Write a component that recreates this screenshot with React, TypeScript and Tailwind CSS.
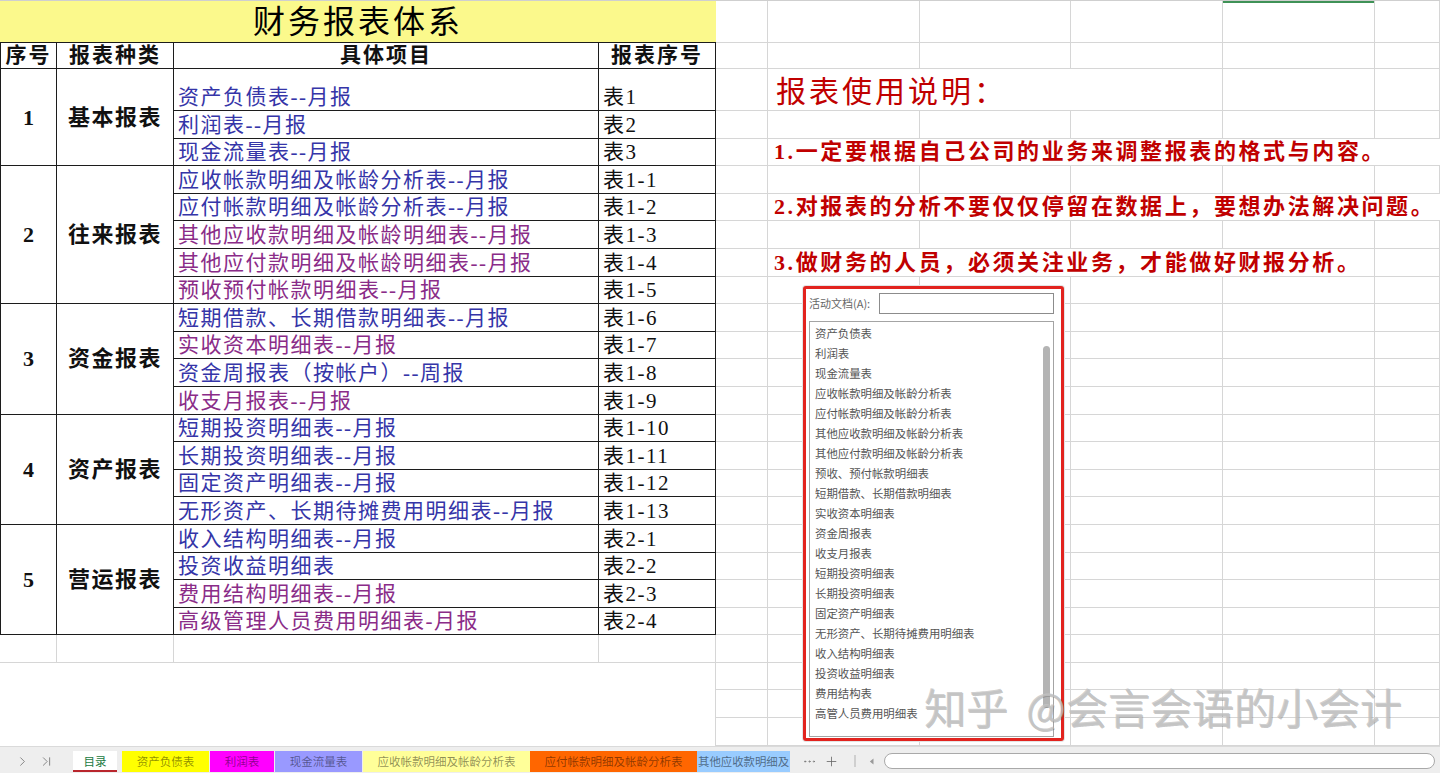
import React from "react";
import { ChevronRight, ChevronLast, Plus, MoreHorizontal } from "lucide-react";

type Item = { t: string; c: string; p?: boolean };
type Group = { n: string; name: string; span: string; items: Item[] };

const groups: Group[] = [
  {
    n: "1",
    name: "基本报表",
    span: "row-span-3",
    items: [
      { t: "资产负债表--月报", c: "表1" },
      { t: "利润表--月报", c: "表2" },
      { t: "现金流量表--月报", c: "表3" },
    ],
  },
  {
    n: "2",
    name: "往来报表",
    span: "row-span-5",
    items: [
      { t: "应收帐款明细及帐龄分析表--月报", c: "表1-1" },
      { t: "应付帐款明细及帐龄分析表--月报", c: "表1-2" },
      { t: "其他应收款明细及帐龄明细表--月报", c: "表1-3", p: true },
      { t: "其他应付款明细及帐龄明细表--月报", c: "表1-4", p: true },
      { t: "预收预付帐款明细表--月报", c: "表1-5", p: true },
    ],
  },
  {
    n: "3",
    name: "资金报表",
    span: "row-span-4",
    items: [
      { t: "短期借款、长期借款明细表--月报", c: "表1-6" },
      { t: "实收资本明细表--月报", c: "表1-7", p: true },
      { t: "资金周报表（按帐户）--周报", c: "表1-8" },
      { t: "收支月报表--月报", c: "表1-9", p: true },
    ],
  },
  {
    n: "4",
    name: "资产报表",
    span: "row-span-4",
    items: [
      { t: "短期投资明细表--月报", c: "表1-10" },
      { t: "长期投资明细表--月报", c: "表1-11" },
      { t: "固定资产明细表--月报", c: "表1-12" },
      { t: "无形资产、长期待摊费用明细表--月报", c: "表1-13" },
    ],
  },
  {
    n: "5",
    name: "营运报表",
    span: "row-span-4",
    items: [
      { t: "收入结构明细表--月报", c: "表2-1" },
      { t: "投资收益明细表", c: "表2-2" },
      { t: "费用结构明细表--月报", c: "表2-3", p: true },
      { t: "高级管理人员费用明细表-月报", c: "表2-4", p: true },
    ],
  },
];

const listItems = [
  "资产负债表",
  "利润表",
  "现金流量表",
  "应收帐款明细及帐龄分析表",
  "应付帐款明细及帐龄分析表",
  "其他应收款明细及帐龄分析表",
  "其他应付款明细及帐龄分析表",
  "预收、预付帐款明细表",
  "短期借款、长期借款明细表",
  "实收资本明细表",
  "资金周报表",
  "收支月报表",
  "短期投资明细表",
  "长期投资明细表",
  "固定资产明细表",
  "无形资产、长期待摊费用明细表",
  "收入结构明细表",
  "投资收益明细表",
  "费用结构表",
  "高管人员费用明细表",
];

const G = "border-r border-b border-[#d6d6d6]";
const B = "border-r border-b border-[#1c1c1c]";
const SERIF = "[font-family:'Liberation_Serif','Noto_Sans_CJK_SC',serif]";
const SANS = "[font-family:'Noto_Sans_CJK_SC','Liberation_Sans',sans-serif]";
const RED_LINE =
  "col-span-5 border-b border-[#d6d6d6] flex items-end pl-[6px] whitespace-nowrap text-[22px] leading-[26px] tracking-[2.6px] font-bold text-[#c00000]";

function rightCells(r: number): React.ReactNode[] {
  const out: React.ReactNode[] = [<div key={`r${r}c4`} className={G} />];
  if (r === 0) {
    for (let c = 5; c < 10; c++)
      out.push(
        <div key={`r0c${c}`} className={`${G} relative`}>
          {c === 8 && <div className="absolute left-0 right-0 top-0 h-[2px] bg-[#3f9257]" />}
        </div>
      );
    return out;
  }
  if (r === 2) {
    out.push(
      <div
        key="r2t"
        className={`col-span-2 border-b border-[#d6d6d6] flex items-end pl-[8px] whitespace-nowrap text-[30px] leading-[36px] tracking-[3px] text-[#c00000] ${SERIF}`}
      >
        报表使用说明：
      </div>
    );
    for (let c = 7; c < 10; c++) out.push(<div key={`r2c${c}`} className={G} />);
    return out;
  }
  if (r === 4) {
    out.push(
      <div key="r4t" className={`${RED_LINE} ${SERIF}`}>
        1.一定要根据自己公司的业务来调整报表的格式与内容。
      </div>
    );
    return out;
  }
  if (r === 6) {
    out.push(
      <div key="r6t" className={`${RED_LINE} ${SERIF}`}>
        2.对报表的分析不要仅仅停留在数据上，要想办法解决问题。
      </div>
    );
    return out;
  }
  if (r === 8) {
    out.push(
      <div
        key="r8t"
        className={`col-span-4 border-r border-b border-[#d6d6d6] flex items-end pl-[6px] whitespace-nowrap text-[22px] leading-[26px] tracking-[2.6px] font-bold text-[#c00000] ${SERIF}`}
      >
        3.做财务的人员，必须关注业务，才能做好财报分析。
      </div>
    );
    out.push(<div key="r8c9" className={G} />);
    return out;
  }
  for (let c = 5; c < 10; c++) out.push(<div key={`r${r}c${c}`} className={G} />);
  return out;
}

function buildCells(): React.ReactNode[] {
  const cells: React.ReactNode[] = [];
  cells.push(
    <div
      key="title"
      className={`col-span-4 bg-[#fbf98c] border-b border-[#1c1c1c] flex items-center justify-center text-[32px] leading-none tracking-[3px] text-black ${SERIF}`}
    >
      财务报表体系
    </div>
  );
  cells.push(...rightCells(0));
  const hd = `flex items-center justify-center text-[21px] leading-none tracking-[2px] font-bold text-[#111] ${SERIF}`;
  cells.push(
    <div key="h0" className={`${B} border-l ${hd}`}>序号</div>,
    <div key="h1" className={`${B} ${hd}`}>报表种类</div>,
    <div key="h2" className={`${B} ${hd}`}>具体项目</div>,
    <div key="h3" className={`${B} ${hd}`}>报表序号</div>
  );
  cells.push(...rightCells(1));
  let r = 2;
  groups.forEach((g) => {
    g.items.forEach((it, i) => {
      if (i === 0) {
        cells.push(
          <div
            key={`g${g.n}n`}
            className={`${g.span} ${B} border-l flex items-center justify-center text-[22px] font-bold text-[#111] ${SERIF}`}
          >
            {g.n}
          </div>,
          <div
            key={`g${g.n}m`}
            className={`${g.span} ${B} flex items-center justify-center text-[22px] tracking-[1.5px] font-bold text-[#111] ${SERIF}`}
          >
            {g.name}
          </div>
        );
      }
      cells.push(
        <div
          key={`it${r}`}
          className={`${B} flex items-end pl-[4px] whitespace-nowrap overflow-hidden text-[21px] leading-[25px] tracking-[1.5px] ${
            it.p ? "text-[#8a2c88]" : "text-[#3535a8]"
          } ${SERIF}`}
        >
          {it.t}
        </div>,
        <div
          key={`cd${r}`}
          className={`${B} flex items-end pl-[4px] whitespace-nowrap overflow-hidden text-[21px] leading-[25px] tracking-[1.5px] text-[#111] ${SERIF}`}
        >
          {it.c}
        </div>
      );
      cells.push(...rightCells(r));
      r++;
    });
  });
  cells.push(
    <div key="e0" className={G} />,
    <div key="e1" className={G} />,
    <div key="e2" className={G} />,
    <div key="e3" className={G} />
  );
  cells.push(...rightCells(22));
  cells.push(<div key="blank" className="col-span-4 row-span-3 border-r border-[#d6d6d6] bg-white" />);
  cells.push(...rightCells(23), ...rightCells(24), ...rightCells(25));
  return cells;
}

const tabs = [
  { t: "资产负债表", cls: "w-[87px] bg-[#ffff00] ml-[5px]" },
  { t: "利润表", cls: "w-[64px] bg-[#ff00ff] ml-[1px]" },
  { t: "现金流量表", cls: "w-[87px] bg-[#9999ff] ml-[1px]" },
  { t: "应收帐款明细及帐龄分析表", cls: "w-[167px] bg-[#ffff99] ml-[1px]" },
  { t: "应付帐款明细及帐龄分析表", cls: "w-[167px] bg-[#ff6600]" },
];

export default function App() {
  return (
    <div className={`relative w-[1440px] h-[773px] overflow-hidden bg-white flex flex-col ${SANS}`}>
      <div className="grid grid-cols-[57px_117px_425px_117px_52px_152px_151px_152px_152px_1fr] grid-rows-[42px_26px_42px_repeat(23,27.6px)] border-t border-[#cfcfcf]">
        {buildCells()}
      </div>

      {/* sheet tab bar */}
      <div className="flex-1 bg-[#eeeeee] border-t border-[#dadada] flex items-start pt-[4px]">
        <div className="shrink-0 w-[73px] h-[21px] flex items-center pl-[15px] gap-[9px] text-[#6f6f6f]">
          <ChevronRight size={15} strokeWidth={1.3} />
          <ChevronLast size={15} strokeWidth={1.3} />
        </div>
        <div className="shrink-0 relative w-[44px] h-[21px] bg-white flex items-center justify-center text-[11.5px] text-[#217a3f]">
          目录
          <div className="absolute left-0 right-0 bottom-0 h-[2px] bg-[#b9262d]" />
        </div>
        {tabs.map((tb) => (
          <div
            key={tb.t}
            className={`${tb.cls} shrink-0 h-[21px] flex items-center justify-center text-[11.5px] text-black/45 whitespace-nowrap`}
          >
            {tb.t}
          </div>
        ))}
        <div className="shrink-0 w-[93px] h-[21px] bg-[#99ccff] flex items-center pl-[1px] overflow-hidden whitespace-nowrap text-[11.4px] text-black/50">
          其他应收款明细及
        </div>
        <div className="shrink-0 w-[18px] h-[21px] ml-[10px] flex items-center justify-center text-[#777]">
          <MoreHorizontal size={15} strokeWidth={1.3} />
        </div>
        <div className="shrink-0 w-[15px] h-[21px] ml-[6px] flex items-center justify-center text-[#666]">
          <Plus size={15} strokeWidth={1.3} />
        </div>
        <div className="shrink-0 h-[21px] flex items-center ml-[15px]">
          <div className="w-[2px] h-[12px] bg-[#cfcfcf]" />
        </div>
        <div className="shrink-0 h-[21px] flex items-center ml-[13px]">
          <svg width="5" height="7" viewBox="0 0 5 7">
            <path d="M4.5 0.5 L0.8 3.5 L4.5 6.5 Z" fill="#9a9a9a" />
          </svg>
        </div>
        <div className="shrink-0 h-[21px] flex items-center ml-[10px]">
          <div className="w-[551px] h-[16px] rounded-full border border-[#a9a9a9] bg-white" />
        </div>
      </div>

      {/* dialog overlay */}
      <div className="absolute left-[803px] top-[286px] w-[261px] h-[455px] border-[3px] border-[#e2231e] rounded-[3px] bg-white shadow-[0_0_0_1px_#e4e4e4] flex flex-col px-[3px] pt-[4px] pb-[1px]">
        <div className="flex items-center h-[21px]">
          <span className="text-[11px] text-[#666] whitespace-nowrap">活动文档(A):</span>
          <div className="ml-auto mr-[4px] w-[175px] h-[21px] border border-[#8c8c8c] bg-white" />
        </div>
        <div className="relative mt-[7px] w-[245px] h-[416px] border border-[#a4a4a4] pl-[5px] pt-[1px]">
          {listItems.map((s) => (
            <div key={s} className="h-[20px] leading-[20px] text-[11.4px] text-[#555] whitespace-nowrap">
              {s}
            </div>
          ))}
          <div className="absolute right-[3px] top-[24px] w-[7px] h-[362px] rounded-full bg-[#b4b4b4]" />
        </div>
      </div>

      {/* watermark */}
      <div className="absolute left-[924px] top-[685px] whitespace-nowrap text-[42px] leading-none text-[#c4c4c4]/80 [text-shadow:1px_1px_0_rgba(110,110,110,0.4)] pointer-events-none">
        知乎<span className="ml-[18px]">@</span>会言会语的小会计
      </div>
    </div>
  );
}
